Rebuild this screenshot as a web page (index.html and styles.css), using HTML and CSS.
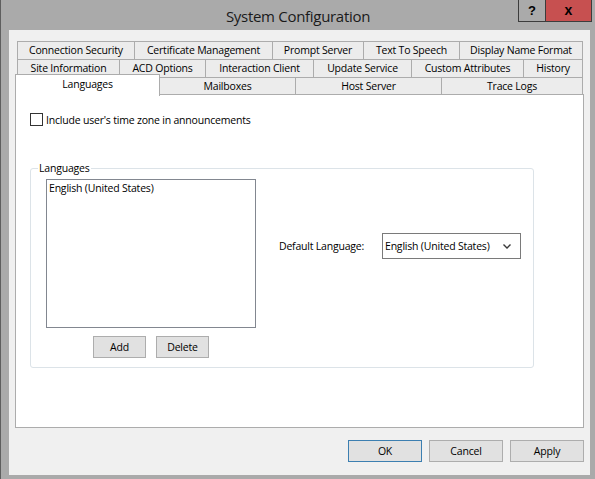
FILE: index.html
```html
<!DOCTYPE html>
<html>
<head>
<meta charset="utf-8">
<title>System Configuration</title>
<link rel="stylesheet" href="styles.css">
</head>
<body>
<div class="window">
  <div class="titlebar">
    <span class="title">System Configuration</span>
    <div class="caption-btns">
      <span class="cap help">?</span>
      <span class="cap close">x</span>
    </div>
  </div>
  <div class="client">
    <div class="tabs">
      <div class="tabrow r1">
        <div class="tab">Connection Security</div>
        <div class="tab">Certificate Management</div>
        <div class="tab">Prompt Server</div>
        <div class="tab">Text To Speech</div>
        <div class="tab last">Display Name Format</div>
      </div>
      <div class="tabrow r2">
        <div class="tab">Site Information</div>
        <div class="tab">ACD Options</div>
        <div class="tab">Interaction Client</div>
        <div class="tab">Update Service</div>
        <div class="tab">Custom Attributes</div>
        <div class="tab last">History</div>
      </div>
      <div class="tabrow r3">
        <div class="tab selected">Languages</div>
        <div class="tab">Mailboxes</div>
        <div class="tab">Host Server</div>
        <div class="tab last">Trace Logs</div>
      </div>
    </div>
    <div class="panel">
      <label class="check"><span class="box"></span><span class="check-text">Include user's time zone in announcements</span></label>
      <fieldset class="group">
        <legend>Languages</legend>
        <div class="group-body">
          <div class="list-col">
            <div class="listbox">
              <div class="item">English (United States)</div>
            </div>
            <div class="list-btns">
              <button class="btn small">Add</button>
              <button class="btn small">Delete</button>
            </div>
          </div>
          <div class="default-lang">
            <span class="dl-label">Default Language:</span>
            <div class="select">
              <span>English (United States)</span>
              <svg class="chev" width="8" height="5" viewBox="0 0 8 5"><polyline points="0.5,0.5 4,4 7.5,0.5" fill="none" stroke="#3a3a3a" stroke-width="1.4"/></svg>
            </div>
          </div>
        </div>
      </fieldset>
    </div>
    <div class="footer">
      <button class="btn wide default">OK</button>
      <button class="btn wide">Cancel</button>
      <button class="btn wide">Apply</button>
    </div>
  </div>
</div>
</body>
</html>
```

FILE: styles.css
```css
* { box-sizing: border-box; }
html, body { margin: 0; padding: 0; }
body {
  background: #aaaaaa;
  font-family: "Open Sans", "Noto Sans", sans-serif;
  font-size: 10.5px;
  letter-spacing: -0.2px;
  color: #000;
}
.window {
  width: 595px;
  height: 479px;
  background: #aaaaaa;
  border-left: 1px solid #5e5e5e;
  display: flex;
  flex-direction: column;
  overflow: hidden;
}
.titlebar {
  position: relative;
  height: 30px;
  flex: 0 0 30px;
  display: flex;
  align-items: center;
  justify-content: center;
}
.title {
  font-size: 15px;
  letter-spacing: -0.3px;
  color: #1a1a1a;
  margin-top: 2px;
}
.caption-btns {
  position: absolute;
  top: 0;
  right: 3px;
  display: flex;
  border: 1px solid #3c3c3c;
  border-top: none;
  height: 22px;
  letter-spacing: 0;
}
.cap {
  display: flex;
  align-items: center;
  justify-content: center;
  font-weight: bold;
  font-family: "Liberation Sans", sans-serif;
  font-size: 13px;
  height: 21px;
}
.help { width: 27px; border-right: 1px solid #3c3c3c; }
.close { width: 45px; background: #c75050; font-size: 14px; padding-bottom: 2px; }
.client {
  flex: 1;
  background: #f0f0f0;
  margin: 0 5px 4px 8px;
  padding: 11px 6px 0 6px;
  display: flex;
  flex-direction: column;
}
.tabs {
  margin-bottom: -1px;
}
.tabrow {
  display: grid;
  grid-template-rows: 18px;
  height: 18px;
}
.r1 { margin-left: 2px; margin-right: 1px; grid-template-columns: 117px 138px 91px 96px 124px; }
.r2 { margin-left: 2px; margin-right: 1px; grid-template-columns: 102px 86px 108px 98px 112px 60px; }
.r3 { margin-right: 1px; grid-template-columns: 145px 135px 146px 142px; }
.tab {
  background: #ececec;
  border-top: 1px solid #acacac;
  border-left: 1px solid #acacac;
  line-height: 16px;
  text-align: center;
  white-space: nowrap;
  height: 18px;
}
.tab.last { border-right: 1px solid #acacac; }
.tab.selected {
  position: relative;
  z-index: 1;
  background: #ffffff;
  margin-top: -3px;
  height: 22px;
  padding-top: 1px;
  border-right: 1px solid #acacac;
}
.r3 .tab.selected + .tab { border-left: none; }
.panel {
  height: 334px;
  background: #ffffff;
  border: 1px solid #acacac;
  padding: 18px 0 0 14px;
}
.check {
  display: flex;
  align-items: center;
  height: 13px;
}
.box {
  width: 13px;
  height: 13px;
  border: 1px solid #333333;
  background: #fff;
  flex: 0 0 13px;
}
.check-text { margin-left: 3px; }
.group {
  margin: 35px 0 0 0;
  width: 504px;
  padding: 0 0 9px 7px;
  border: 1px solid #dce3e8;
  border-radius: 3px;
  min-width: 0;
}
.group legend {
  padding: 0 1px;
  line-height: 14px;
}
.group-body {
  display: flex;
  padding: 4px 0 0 8px;
}
.list-col {
  display: flex;
  flex-direction: column;
  align-items: center;
  width: 210px;
}
.listbox {
  width: 210px;
  height: 149px;
  border: 1px solid #828790;
  background: #fff;
  padding: 1px 2px;
}
.item { line-height: 15px; }
.list-btns {
  display: flex;
  gap: 10px;
  margin-top: 8px;
}
.btn {
  font-family: inherit;
  font-size: 10.5px;
  letter-spacing: -0.2px;
  color: #000;
  background: #e1e1e1;
  border: 1px solid #adadad;
  height: 22px;
  padding: 0;
  margin: 0;
  border-radius: 0;
}
.btn.small { width: 53px; }
.btn.wide { width: 74px; }
.btn.default { border-color: #3c7fb1; }
.default-lang {
  display: flex;
  align-items: center;
  margin-left: 23px;
  margin-top: 54px;
  align-self: flex-start;
}
.dl-label { width: 103px; }
.select {
  width: 139px;
  height: 26px;
  border: 1px solid #7a7a7a;
  background: #fff;
  display: flex;
  align-items: center;
  justify-content: space-between;
  padding: 0 9px 0 2px;
}
.chev { display: block; }
.footer {
  display: flex;
  justify-content: flex-end;
  gap: 7px;
  margin-top: 12px;
}
```
